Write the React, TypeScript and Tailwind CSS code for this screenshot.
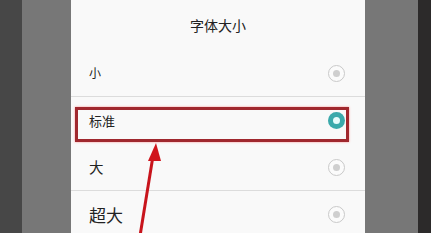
import React from 'react';

type Option = { label: string; size: string; selected?: boolean; divider?: boolean };

const options: Option[] = [
  { label: '小', size: 'text-[12px]', divider: true },
  { label: '标准', size: 'text-[13px]', selected: true },
  { label: '大', size: 'text-[14.5px]', divider: true },
  { label: '超大', size: 'text-[17px]' },
];

const Radio: React.FC<{ checked?: boolean }> = ({ checked }) =>
  checked ? (
    <div className="w-[17px] h-[17px] rounded-full bg-[#3aa9ab] flex items-center justify-center">
      <div className="w-[7px] h-[7px] rounded-full bg-[#e6fbfb]" />
    </div>
  ) : (
    <div className="w-[17px] h-[17px] rounded-full border border-[#c9c9c9] bg-[#fbfbfb] flex items-center justify-center">
      <div className="w-[7px] h-[7px] rounded-full bg-[#cfcfcf]" />
    </div>
  );

const App: React.FC = () => {
  return (
    <div
      className="relative w-[431px] h-[233px] overflow-hidden flex"
      style={{ fontFamily: '"Noto Sans CJK SC", "Noto Sans", sans-serif' }}
    >
      <div className="w-[22px] bg-[#474747]" />
      <div className="w-[49px] bg-[#777777]" />

      {/* Dialog */}
      <div className="relative w-[294px] bg-[#f9f9f9] text-[#222]">
        <div className="h-[50px] flex items-center justify-center text-[14px]">字体大小</div>
        {options.map((o) => (
          <div
            key={o.label}
            className={`h-[47px] flex items-center justify-between pl-[18px] pr-[20px] ${
              o.divider ? 'border-b border-[#dcdcdc]' : ''
            }`}
          >
            <span className={o.size}>{o.label}</span>
            <Radio checked={o.selected} />
          </div>
        ))}

        {/* Annotation box */}
        <div className="absolute left-[4px] top-[107px] w-[274px] h-[35px] border-[3px] border-[#a0282e] shadow-[0_0_2px_rgba(255,120,120,0.8)]" />
      </div>

      <div className="w-[53px] bg-[#777777]" />
      <div className="flex-1 bg-[#2c2a2a]" />

      {/* Arrow */}
      <svg className="absolute left-0 top-0" width="431" height="233" viewBox="0 0 431 233">
        <line x1="140" y1="236" x2="153" y2="156" stroke="#c8141c" strokeWidth="3" />
        <polygon points="156,143 148,161 161,161" fill="#d0141c" />
      </svg>
    </div>
  );
};

export default App;
